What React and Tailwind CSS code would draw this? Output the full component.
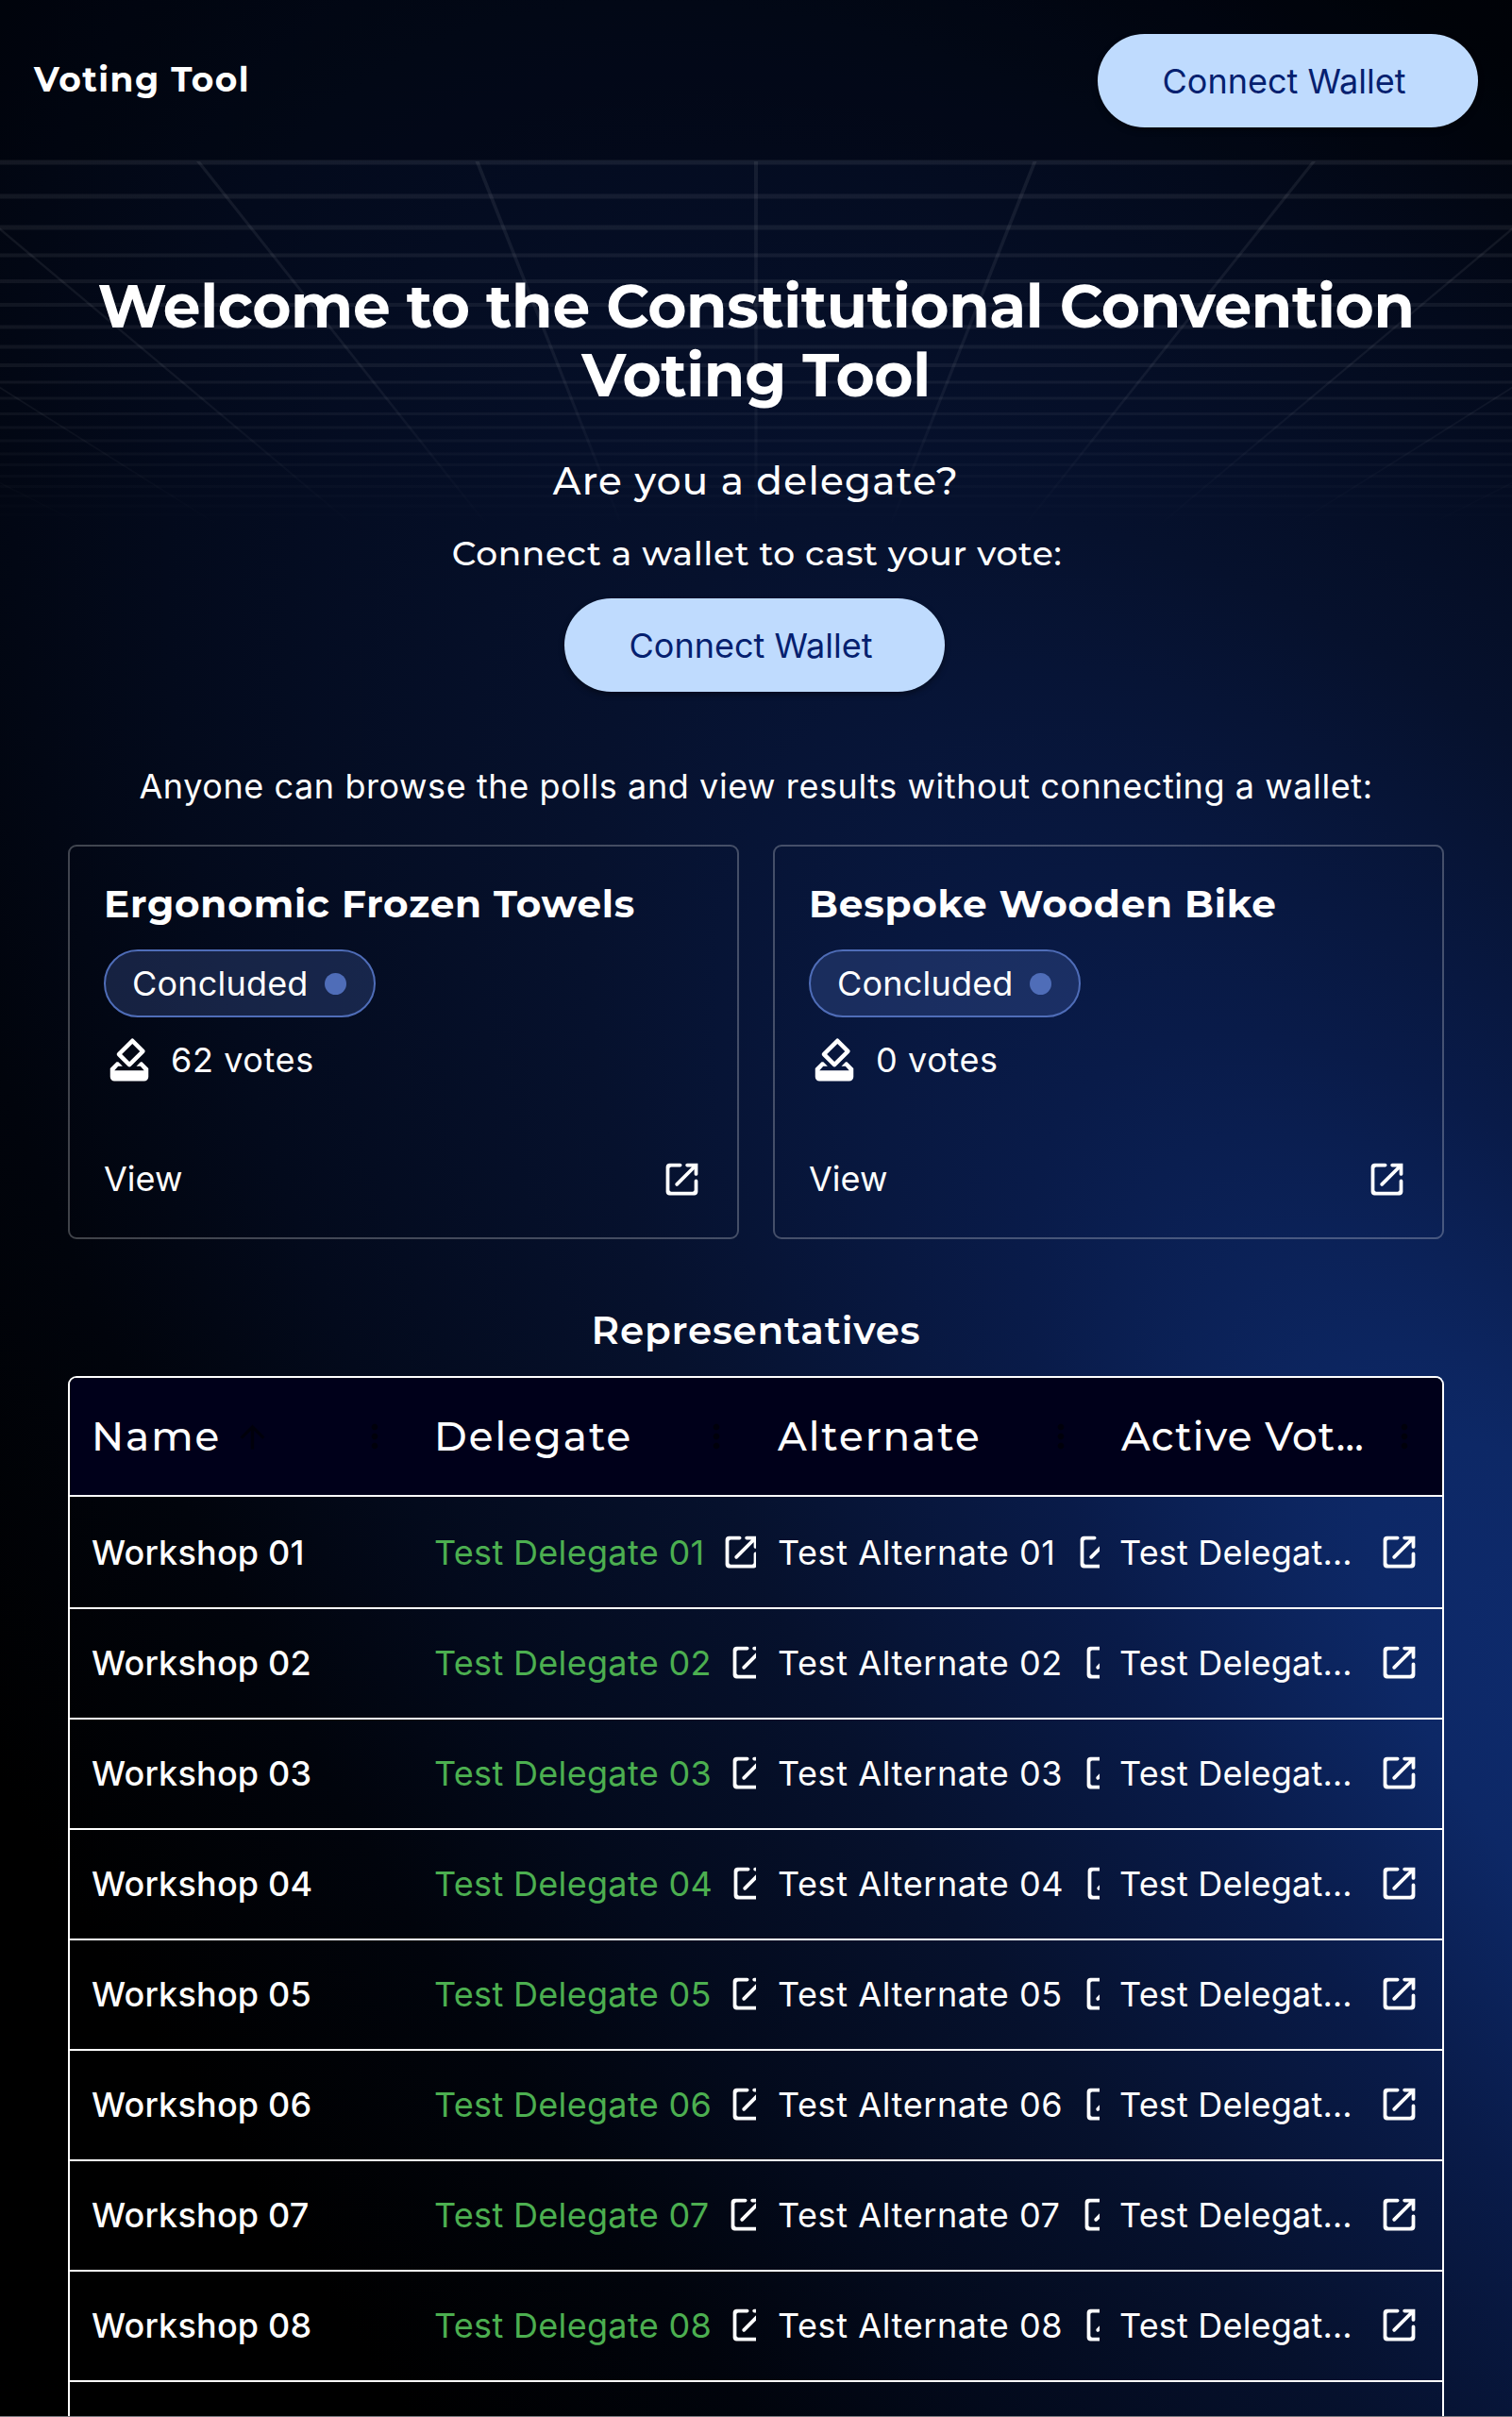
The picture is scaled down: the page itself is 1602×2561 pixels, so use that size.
import { MdHowToVote, MdArrowUpward, MdMoreVert } from "react-icons/md";

const gridRows = [171.5, 207.5, 240.5, 270.5, 298, 323, 346.5, 367.5, 387, 405.5, 422.5, 439, 453.5, 467.5, 481.5, 493, 505, 516, 526, 536.5, 546];
const gridColumns = [-6, -5, -4, -3, -2, -1, 0, 1, 2, 3, 4, 5, 6];

function Backdrop() {
  return (
    <svg className="absolute inset-0 -z-10" width="1602" height="2561" viewBox="0 0 1602 2561" fill="none">
      <defs>
        <radialGradient id="glow" gradientUnits="userSpaceOnUse" cx="0" cy="0" r="1.3" gradientTransform="matrix(1800 1440 0 1600 1720 1850)">
          <stop offset="0" stopColor="#0e2b6e" />
          <stop offset="0.115" stopColor="#0d2866" />
          <stop offset="0.27" stopColor="#091b49" />
          <stop offset="0.47" stopColor="#06112d" />
          <stop offset="0.66" stopColor="#030a1c" />
          <stop offset="0.8" stopColor="#01040c" />
          <stop offset="1" stopColor="#000000" />
        </radialGradient>
        <linearGradient id="fade" gradientUnits="userSpaceOnUse" x1="0" y1="171" x2="0" y2="560">
          <stop offset="0" stopColor="#fff" stopOpacity="0.07" />
          <stop offset="0.6" stopColor="#fff" stopOpacity="0.055" />
          <stop offset="1" stopColor="#fff" stopOpacity="0" />
        </linearGradient>
      </defs>
      <rect width="1602" height="2561" fill="url(#glow)" />
      <rect width="1602" height="170" fill="#000" fillOpacity="0.2" />
      {gridRows.map((y, i) => (
        <rect key={y} x="0" y={y - 2} width="1602" height={i < 3 ? 5 : i < 9 ? 4 : 3} fill="url(#fade)" />
      ))}
      {gridColumns.map((n) => (
        <polygon
          key={n}
          points={`${801 + n * 295.5 - 2},171 ${801 + n * 295.5 + 2},171 ${801 + n * 141 + 1.4},560 ${801 + n * 141 - 1.4},560`}
          fill="url(#fade)"
        />
      ))}
    </svg>
  );
}

function OpenIcon() {
  return (
    <svg className="size-[45px] shrink-0" viewBox="0 0 24 24" fill="currentColor">
      <path d="M18 19H6c-.55 0-1-.45-1-1V6c0-.55.45-1 1-1h5c.55 0 1-.45 1-1s-.45-1-1-1H5c-1.11 0-2 .9-2 2v14c0 1.1.9 2 2 2h14c1.1 0 2-.9 2-2v-6c0-.55-.45-1-1-1s-1 .45-1 1v5c0 .55-.45 1-1 1zM14 4c0 .55.45 1 1 1h2.59l-9.13 9.13c-.39.39-.39 1.02 0 1.41.39.39 1.02.39 1.41 0L19 6.41V9c0 .55.45 1 1 1s1-.45 1-1V3h-6c-.55 0-1 .45-1 1z" />
    </svg>
  );
}

function ConnectButton() {
  return (
    <button className="flex h-[99px] w-[403px] items-center justify-center rounded-full bg-[#bfdbfe] pr-[8px] text-[36px] leading-none text-[#05206f] shadow-[0_3px_6px_rgba(0,0,0,0.4)]">
      Connect Wallet
    </button>
  );
}

function PollCard({ title, votes }) {
  return (
    <article className="flex h-[418px] w-[711px] flex-col rounded-[9px] border-2 border-white/25 px-[36px]">
      <h3 className="mt-[32px] self-start font-[Montserrat] text-[40.5px] leading-[58px] font-bold tracking-[0.8px]">{title}</h3>
      <div className="mt-[19px] flex h-[72px] w-[288px] items-center justify-between rounded-full border-2 border-[#4f6db8] bg-[#4f6db8]/27 pr-[29px] pl-[28px]">
        <span className="text-[36px] leading-none tracking-[0.2px]">Concluded</span>
        <span className="size-[23px] rounded-full bg-[#4f6db8]" />
      </div>
      <div className="mt-[18px] flex items-center">
        <MdHowToVote className="size-[54px]" />
        <span className="ml-[17px] text-[36px] leading-[54px] tracking-[0.6px]">{votes} votes</span>
      </div>
      <div className="mt-[72px] flex items-center justify-between">
        <span className="text-[36px] leading-[54px]">View</span>
        <OpenIcon />
      </div>
    </article>
  );
}

const columns = [
  { label: "Name", text: "tracking-[2px]", menu: "mr-[43px]", sorted: true },
  { label: "Delegate", text: "tracking-[2px]", menu: "mr-[45px]" },
  { label: "Alternate", text: "tracking-[2px]", menu: "mr-[44px]" },
  { label: "Active Vot…", text: "tracking-[1.2px]", menu: "mr-[22px]" },
];
const ids = ["01", "02", "03", "04", "05", "06", "07", "08"];

function HeaderCell({ label, text, menu, sorted }) {
  return (
    <div className="flex items-center">
      <span className={"font-[Montserrat] text-[42px] leading-[60px] font-medium whitespace-nowrap " + text}>{label}</span>
      {sorted && <MdArrowUpward className="ml-[14px] size-[39px] text-[#00000b]" />}
      <MdMoreVert className={"ml-auto size-[40px] shrink-0 text-[#00000b] " + menu} />
    </div>
  );
}

function Row({ id }) {
  return (
    <div className="flex h-[117px] items-center border-b-2 border-white pr-[23px] pb-[2px] pl-[23px] text-[36px] leading-[54px] whitespace-nowrap">
      <div className="w-[363px] font-medium tracking-[0.2px]">Workshop {id}</div>
      <div className="flex w-[341px] items-center overflow-hidden">
        <span className="tracking-[0.33px] text-[#4caf50]">Test Delegate {id}</span>
        <span className="ml-[17px]"><OpenIcon /></span>
      </div>
      <div className="ml-[23px] flex w-[341px] items-center overflow-hidden">
        <span className="tracking-[0.6px]">Test Alternate {id}</span>
        <span className="ml-[20px]"><OpenIcon /></span>
      </div>
      <div className="ml-[21px] flex flex-1 items-center justify-between">
        <span className="tracking-[0.2px]">Test Delegat…</span>
        <OpenIcon />
      </div>
    </div>
  );
}

export default function App() {
  return (
    <div className="relative isolate h-[2561px] w-[1602px] overflow-hidden bg-black font-[Inter,sans-serif] text-white">
      <Backdrop />
      <header className="flex h-[171px] items-center justify-between px-[36px]">
        <span className="mb-[4px] font-[Montserrat] text-[36px] leading-[54px] font-bold tracking-[1.4px]">Voting Tool</span>
        <ConnectButton />
      </header>
      <main className="flex flex-col items-center px-[72px]">
        <h1 className="mt-[117px] w-[1458px] text-center font-[Montserrat] text-[63px] leading-[73px] font-bold tracking-[-0.4px]">
          Welcome to the Constitutional Convention Voting Tool
        </h1>
        <h2 className="mt-[47px] font-[Montserrat] text-[40.5px] leading-[58px] font-medium tracking-[1.3px]">Are you a delegate?</h2>
        <h3 className="mt-[22px] mb-[23px] pl-[2px] font-[Montserrat] text-[36px] leading-[50px] font-medium tracking-[0.62px]">Connect a wallet to cast your vote:</h3>
        <div className="mr-[3px]">
          <ConnectButton />
        </div>
        <p className="mt-[73px] text-[36px] leading-[54px] tracking-[0.58px] whitespace-nowrap">Anyone can browse the polls and view results without connecting a wallet:</p>
        <section className="mt-[35px] flex w-full justify-between">
          <PollCard title="Ergonomic Frozen Towels" votes={62} />
          <PollCard title="Bespoke Wooden Bike" votes={0} />
        </section>
        <h2 className="mt-[68px] font-[Montserrat] text-[40.5px] leading-[58px] font-semibold tracking-[0.8px]">Representatives</h2>
        <section className="mt-[19px] flex h-[1110px] w-full flex-col rounded-t-[9px] border-2 border-b-0 border-white">
          <div className="grid h-[126px] shrink-0 grid-cols-[363px_364px_364px_342px] rounded-t-[7px] border-b-2 border-white bg-[#00001a] pl-[23px]">
            {columns.map((c) => (
              <HeaderCell key={c.label} {...c} />
            ))}
          </div>
          <div className="pt-[2px]">
            {ids.map((id) => (
              <Row key={id} id={id} />
            ))}
          </div>
        </section>
      </main>
      <div className="absolute bottom-0 left-0 h-px w-full bg-[#7c7b80]" />
    </div>
  );
}
